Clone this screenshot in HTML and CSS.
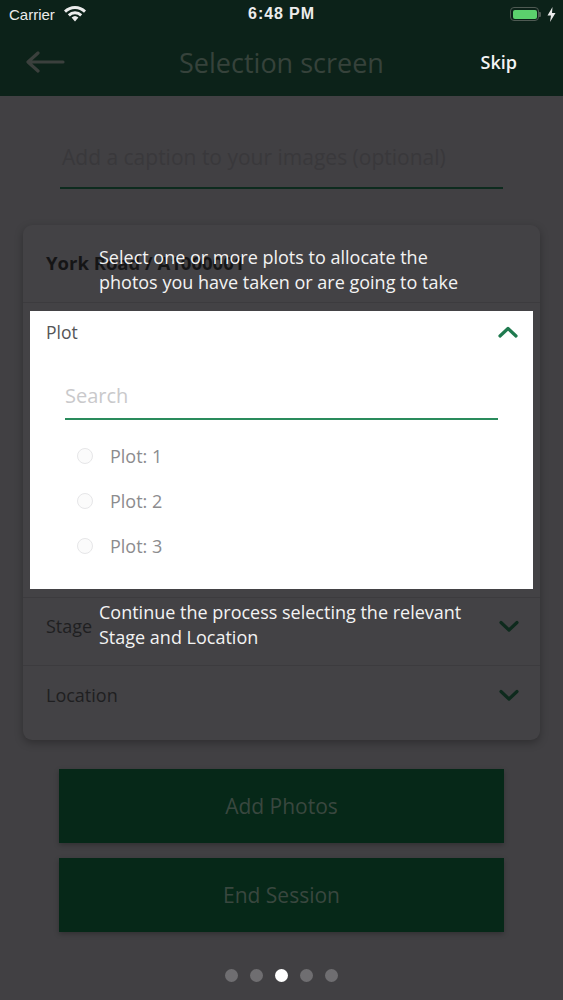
FILE: index.html
```html
<!DOCTYPE html>
<html lang="en">
<head>
<meta charset="utf-8">
<title>Selection screen</title>
<link rel="stylesheet" href="styles.css">
</head>
<body>
<div class="app">
  <header class="topbar">
    <div class="statusbar">
      <div class="status-left">
        <span class="carrier">Carrier</span>
        <svg class="wifi" width="24" height="17" viewBox="0 0 24 17">
          <path d="M12 16.5 L8.6 12.6 A5 5 0 0 1 15.4 12.6 Z" fill="#ececec"/>
          <path d="M4.8 9.2 A10.3 10.3 0 0 1 19.2 9.2 L17.2 11.4 A7.4 7.4 0 0 0 6.8 11.4 Z" fill="#ececec"/>
          <path d="M1 5.5 A15.6 15.6 0 0 1 23 5.5 L21 7.8 A12.6 12.6 0 0 0 3 7.8 Z" fill="#ececec"/>
        </svg>
      </div>
      <div class="time">6:48 PM</div>
      <div class="status-right">
        <span class="battery"><span class="battery-fill"></span></span>
        <span class="battery-nub"></span>
        <svg class="bolt" width="9" height="15" viewBox="0 0 9 15">
          <path d="M5.5 0 L0.5 8.6 L4 8.6 L3 15 L8.5 6 L5 6 Z" fill="#ececec"/>
        </svg>
      </div>
    </div>
    <nav class="navbar">
      <svg class="back" width="40" height="22" viewBox="0 0 40 22">
        <path d="M38 11 H4 M13 2 L3 11 L13 20" fill="none" stroke="#3b403d" stroke-width="3.2" stroke-linecap="round" stroke-linejoin="round"/>
      </svg>
      <h1 class="title">Selection screen</h1>
      <span class="skip">Skip</span>
    </nav>
  </header>

  <main class="content">
    <div class="caption">Add a caption to your images (optional)</div>

    <section class="card">
      <div class="card-head">York Road / A1000001</div>
      <div class="plot-section">
        <div class="plot-panel">
          <div class="panel-head">
            <span class="panel-label">Plot</span>
            <svg class="chev" width="20" height="12" viewBox="0 0 20 12">
              <path d="M2 10 L10 2.5 L18 10" fill="none" stroke="#1f7a4f" stroke-width="3.2" stroke-linecap="round" stroke-linejoin="round"/>
            </svg>
          </div>
          <div class="search">Search</div>
          <ul class="plot-list">
            <li class="plot-item"><span class="radio"></span><span>Plot: 1</span></li>
            <li class="plot-item"><span class="radio"></span><span>Plot: 2</span></li>
            <li class="plot-item"><span class="radio"></span><span>Plot: 3</span></li>
          </ul>
        </div>
      </div>
      <div class="row row-divider">
        <span class="row-label">Stage</span>
        <svg class="chev" width="20" height="12" viewBox="0 0 20 12">
          <path d="M2 2.5 L10 10 L18 2.5" fill="none" stroke="#0e2a1d" stroke-width="3.2" stroke-linecap="round" stroke-linejoin="round"/>
        </svg>
      </div>
      <div class="row row-last">
        <span class="row-label">Location</span>
        <svg class="chev" width="20" height="12" viewBox="0 0 20 12">
          <path d="M2 2.5 L10 10 L18 2.5" fill="none" stroke="#0e2a1d" stroke-width="3.2" stroke-linecap="round" stroke-linejoin="round"/>
        </svg>
      </div>
    </section>

    <div class="actions">
      <button class="btn">Add Photos</button>
      <button class="btn">End Session</button>
    </div>

    <div class="dots">
      <span class="dot"></span>
      <span class="dot"></span>
      <span class="dot active"></span>
      <span class="dot"></span>
      <span class="dot"></span>
    </div>
  </main>

  <p class="hint hint-plot">Select one or more plots to allocate the<br>photos you have taken or are going to take</p>
  <p class="hint hint-stage">Continue the process selecting the relevant<br>Stage and Location</p>
</div>
</body>
</html>
```

FILE: styles.css
```css
* { box-sizing: border-box; }

html, body {
  margin: 0;
  padding: 0;
}

body {
  width: 563px;
  height: 1000px;
  overflow: hidden;
  background: #414043;
  font-family: "Open Sans", "Noto Sans", sans-serif;
}

.app {
  position: relative;
  height: 1000px;
}

/* ---------- top bar ---------- */
.topbar {
  background: #0c2219;
  height: 96px;
}

.statusbar {
  height: 28px;
  display: flex;
  align-items: center;
  justify-content: space-between;
  padding: 0 7px 0 9px;
  font-family: "Liberation Sans", Arial, sans-serif;
  color: #ececec;
  font-size: 15px;
  position: relative;
}

.status-left {
  display: flex;
  align-items: center;
  gap: 8px;
}

.wifi { margin-top: -1px; }

.time {
  position: absolute;
  left: 0;
  right: 0;
  text-align: center;
  font-weight: bold;
  font-size: 16px;
  letter-spacing: 0.9px;
  pointer-events: none;
}

.status-right {
  display: flex;
  align-items: center;
}

.battery {
  width: 29px;
  height: 14px;
  border: 1.5px solid #4f5a53;
  border-radius: 4px;
  padding: 1.5px;
  display: flex;
}

.battery-fill {
  flex: 1;
  background: #5bd16d;
  border-radius: 2px;
}

.battery-nub {
  width: 2px;
  height: 5px;
  background: #4f5a53;
  border-radius: 0 1px 1px 0;
  margin-right: 6px;
}

.navbar {
  height: 68px;
  display: flex;
  align-items: center;
  justify-content: space-between;
  padding: 0 46px 0 25px;
  position: relative;
}

.back { margin-top: -1px; }

.title {
  position: absolute;
  left: 0;
  right: 0;
  margin: 0;
  text-align: center;
  font-size: 27px;
  font-weight: normal;
  color: #36423b;
  pointer-events: none;
}

.skip {
  color: #f4f4f4;
  font-size: 18px;
  font-weight: 600;
}

/* ---------- content ---------- */
.content {
  display: flex;
  flex-direction: column;
}

.caption {
  margin: 48px 60px 0 60px;
  padding: 0 0 17px 2px;
  font-size: 21px;
  line-height: 26px;
  color: #39383b;
  border-bottom: 2px solid #0d2b1e;
  white-space: nowrap;
}

.card {
  margin: 36px 23px 0 23px;
  background: #434245;
  border-radius: 9px;
  box-shadow: 0 3px 8px rgba(0, 0, 0, 0.28);
  padding-bottom: 5px;
}

.card-head {
  height: 78px;
  display: flex;
  align-items: center;
  padding: 0 23px 2px 23px;
  font-size: 18.5px;
  font-weight: bold;
  color: #151516;
  border-bottom: 1px solid #3c3b3e;
}

.plot-section {
  padding: 8px 7px 8px 7px;
  border-bottom: 1px solid #3c3b3e;
}

.plot-panel {
  background: #ffffff;
  height: 278px;
  padding: 0 35px 0 16px;
}

.panel-head {
  height: 42px;
  display: flex;
  align-items: center;
  justify-content: space-between;
  margin-right: -20px;
  font-size: 17.5px;
  color: #555557;
}

.search {
  margin: 30px 0 0 19px;
  padding: 0 0 9px 0;
  font-size: 20px;
  line-height: 26px;
  color: #c9c9cb;
  border-bottom: 2.5px solid #2a8b5c;
}

.plot-list {
  list-style: none;
  margin: 13px 0 0 0;
  padding: 0;
}

.plot-item {
  height: 45px;
  display: flex;
  align-items: center;
  gap: 17px;
  padding-left: 31px;
  font-size: 18px;
  color: #8c8c8e;
}

.radio {
  width: 16px;
  height: 16px;
  border-radius: 50%;
  border: 1px solid #e6e6e8;
  background: #fbfbfb;
}

.row {
  display: flex;
  align-items: center;
  justify-content: space-between;
  padding: 0 21px 0 23px;
  font-size: 18px;
  color: #1f1f21;
}

.row-divider {
  height: 68px;
  padding-bottom: 12px;
  border-bottom: 1px solid #3c3b3e;
}

.row-last {
  height: 69px;
  padding-bottom: 11px;
}

.actions {
  margin: 29px 59px 0 59px;
  display: flex;
  flex-direction: column;
  gap: 15px;
}

.btn {
  height: 74px;
  border: 0;
  margin: 0;
  background: #062818;
  color: #39473f;
  font-family: "Open Sans", "Noto Sans", sans-serif;
  font-size: 21px;
  box-shadow: 0 2px 5px rgba(0, 0, 0, 0.25);
}

.dots {
  margin-top: 37px;
  display: flex;
  justify-content: center;
  gap: 12px;
}

.dot {
  width: 13px;
  height: 13px;
  border-radius: 50%;
  background: #6f6e71;
}

.dot.active { background: #ffffff; }

/* ---------- coach-mark hints (overlay) ---------- */
.hint {
  position: absolute;
  left: 99px;
  margin: 0;
  font-size: 18px;
  line-height: 25px;
  color: #f3f3f3;
}

.hint-plot { top: 245px; }
.hint-stage { top: 600px; }
```
